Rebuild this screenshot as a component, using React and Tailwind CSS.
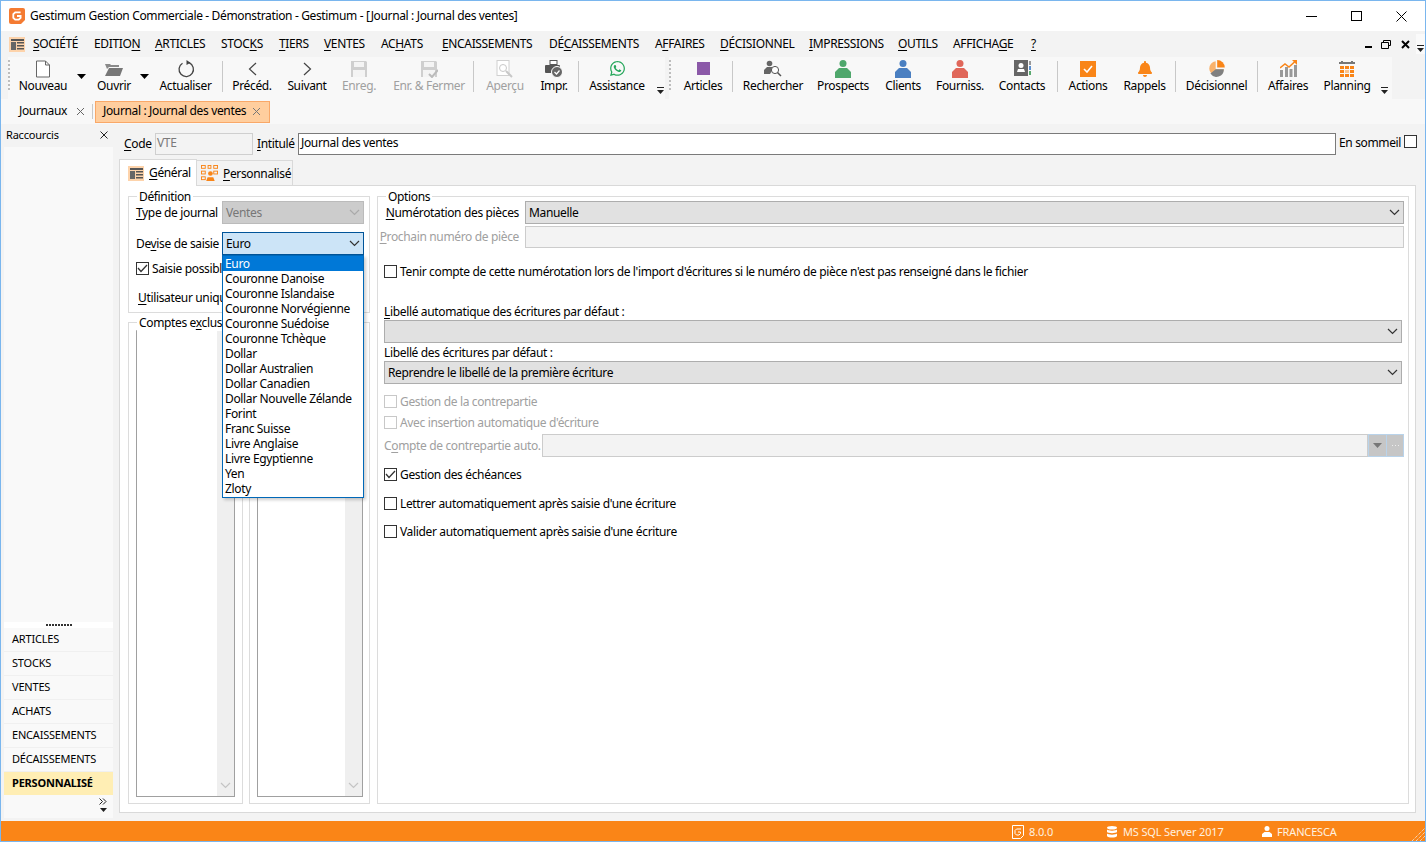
import { FaWhatsapp, FaBell } from 'react-icons/fa';

const Chevron = ({ color = '#333', className = '' }) => (
  <svg width="11" height="7" viewBox="0 0 11 7" className={className}>
    <polyline points="1,1 5.5,5.5 10,1" fill="none" stroke={color} strokeWidth="1.2" />
  </svg>
);

const Caret = ({ color = '#000' }) => (
  <svg width="9" height="5" viewBox="0 0 9 5"><polygon points="0,0 9,0 4.5,5" fill={color} /></svg>
);

const Overflow = () => (
  <svg width="7" height="7" viewBox="0 0 7 7">
    <rect x="0" y="0" width="7" height="1" fill="#222" />
    <polygon points="0,3 7,3 3.5,7" fill="#222" />
  </svg>
);

const GLogo = () => (
  <svg width="16" height="16" viewBox="0 0 16 16">
    <path d="M2 0h12a2 2 0 0 1 2 2v10l-4 4H2a2 2 0 0 1-2-2V2a2 2 0 0 1 2-2z" fill="#f47b32" />
    <path d="M11.6 4.3H6.2L4.3 6.2v3.6l1.9 1.9h3.6l1.8-1.8V8H8" fill="none" stroke="#fff" strokeWidth="1.8" />
  </svg>
);

const FormIcon = () => (
  <svg width="16" height="15" viewBox="0 0 16 15">
    <rect width="16" height="15" fill="#fdd3ab" />
    <rect x="2" y="2" width="13" height="2" fill="#555" />
    <rect x="2" y="5" width="5" height="8" fill="#666" />
    <rect x="8" y="5" width="7" height="1.5" fill="#555" />
    <rect x="8" y="8" width="7" height="1.5" fill="#555" />
    <rect x="8" y="11" width="7" height="1.5" fill="#555" />
  </svg>
);

const Person = ({ color }) => (
  <svg width="16" height="18" viewBox="0 0 16 18">
    <circle cx="8" cy="3.5" r="3.5" fill={color} />
    <path d="M4 8h8l4 4v6H0v-6z" fill={color} />
  </svg>
);

const Floppy = ({ check }) => (
  <svg width="18" height="18" viewBox="0 0 18 18">
    <path d="M1 1h15l1 1v15H1z" fill="#cfcfcf" />
    <rect x="4" y="2" width="10" height="5" fill="#f4f4f4" />
    <rect x="3" y="10" width="12" height="7" fill="#f4f4f4" />
    {check && <polyline points="9,14 12,17 18,10" fill="none" stroke="#bbb" strokeWidth="2" />}
  </svg>
);

const icons = {
  nouveau: (
    <svg width="16" height="18" viewBox="0 0 16 18">
      <path d="M1.5 1h9l4 4v12h-13z M10.5 1v4h4" fill="#fff" stroke="#666" />
    </svg>
  ),
  ouvrir: (
    <svg width="18" height="14" viewBox="0 0 18 14">
      <path d="M0 2h5l1 1h8v2H4L2 7z" fill="#8a8a8a" />
      <path d="M4 6h14l-3 8H0z" fill="#777" />
    </svg>
  ),
  refresh: (
    <svg width="18" height="18" viewBox="0 0 18 18">
      <path d="M5.5 3.2A7.2 7.2 0 1 0 12 2.7" fill="none" stroke="#444" strokeWidth="1.3" />
      <polygon points="9.5,0 13.5,2.8 9.5,5" fill="#444" />
    </svg>
  ),
  prev: (
    <svg width="9" height="14" viewBox="0 0 9 14"><polyline points="8,1 1.5,7 8,13" fill="none" stroke="#444" strokeWidth="1.2" /></svg>
  ),
  next: (
    <svg width="9" height="14" viewBox="0 0 9 14"><polyline points="1,1 7.5,7 1,13" fill="none" stroke="#444" strokeWidth="1.2" /></svg>
  ),
  save: <Floppy />,
  saveClose: <Floppy check />,
  apercu: (
    <svg width="18" height="18" viewBox="0 0 18 18">
      <rect x="1" y="0.5" width="12" height="15" fill="#fff" stroke="#d0d0d0" />
      <circle cx="7" cy="8" r="3.5" fill="none" stroke="#c8c8c8" />
      <line x1="10" y1="11" x2="16" y2="17" stroke="#c8c8c8" strokeWidth="2" />
    </svg>
  ),
  impr: (
    <svg width="18" height="18" viewBox="0 0 18 18">
      <rect x="5" y="0.5" width="7" height="4" fill="#fff" stroke="#555" />
      <rect x="0" y="5" width="15" height="8" rx="1" fill="#555" />
      <circle cx="12" cy="12" r="5.5" fill="#666" stroke="#fff" />
      <polyline points="9.5,12 11.5,14 14.5,10.5" fill="none" stroke="#fff" strokeWidth="1.2" />
    </svg>
  ),
  whatsapp: <FaWhatsapp size={17} color="#27a75c" />,
  articles: <div className="w-[13px] h-[13px] bg-[#8b59a8]" />,
  search: (
    <svg width="18" height="18" viewBox="0 0 18 18">
      <circle cx="5.5" cy="3.5" r="2.8" fill="#666" />
      <path d="M3 7h5l1 2-3 5H0v-4z" fill="#666" />
      <circle cx="11" cy="10" r="3.6" fill="#fff" stroke="#555" />
      <line x1="13.5" y1="12.5" x2="17" y2="16" stroke="#555" strokeWidth="1.5" />
    </svg>
  ),
  prospects: <Person color="#4fa76c" />,
  clients: <Person color="#4a7fc1" />,
  fourniss: <Person color="#e0675a" />,
  contacts: (
    <svg width="17" height="17" viewBox="0 0 17 17">
      <rect width="14" height="16" fill="#666" />
      <circle cx="7" cy="5.5" r="2.5" fill="#fff" />
      <path d="M3 12l1-3h6l1 3z" fill="#fff" />
      <rect x="15" y="1" width="2" height="4" fill="#999" />
      <rect x="15" y="6" width="2" height="4" fill="#5b8fd0" />
      <rect x="15" y="11" width="2" height="4" fill="#5aa96f" />
    </svg>
  ),
  actions: (
    <div className="w-[16px] h-[16px] bg-[#f98518] flex items-center justify-center">
      <svg width="10" height="8" viewBox="0 0 10 8"><polyline points="1,4 4,7 9,1" fill="none" stroke="#fff" strokeWidth="1.6" /></svg>
    </div>
  ),
  rappels: <FaBell size={16} color="#f98518" />,
  pie: (
    <svg width="17" height="17" viewBox="0 0 17 17">
      <path d="M7.7 1.2A7.3 7.3 0 1 0 15.8 9.3H7.7z" fill="#f9b26b" />
      <path d="M9.2 0A7.6 7.6 0 0 1 16.8 7.6H9.2z" fill="#f98518" />
      <path d="M2.4 13.6L7.7 9.3h8.1A7.3 7.3 0 0 1 2.4 13.6z" fill="#808080" />
    </svg>
  ),
  affaires: (
    <svg width="17" height="17" viewBox="0 0 17 17">
      <rect x="0" y="10" width="3" height="7" fill="#999" />
      <rect x="5" y="7" width="3" height="10" fill="#999" />
      <rect x="9.5" y="9" width="3" height="8" fill="#999" />
      <rect x="14" y="5" width="3" height="12" fill="#999" />
      <polyline points="0,8 5,4 9,7 15,1.5" fill="none" stroke="#f98518" strokeWidth="1.5" />
      <polygon points="12,0 17,0 17,5" fill="#f98518" />
    </svg>
  ),
  planning: (
    <svg width="16" height="16" viewBox="0 0 16 16">
      <rect x="0" y="1" width="16" height="2" fill="#777" />
      <rect x="2" y="0" width="2" height="2" fill="#777" />
      <rect x="12" y="0" width="2" height="2" fill="#777" />
      {[5, 9, 13].map((y) =>
        [1, 6, 11].map((x) => (
          <rect key={`${x}-${y}`} x={x} y={y} width="4" height="3" fill={y === 9 && x === 6 ? '#fbc48e' : '#f98518'} />
        ))
      )}
    </svg>
  ),
};

const Tool = ({ w, icon, label, disabled }) => (
  <div className={`${w} h-full flex flex-col items-center`}>
    <div className="h-[19px] mt-[2px] flex items-center justify-center">{icons[icon]}</div>
    <span className={`leading-[16px] ${disabled ? 'text-[#a0a0a0]' : 'text-black'}`}>{label}</span>
  </div>
);

const Sep = () => <div className="w-px h-[31px] mt-[4px] bg-[#c8c8c8]" />;
const Grip = () => (
  <div className="w-[5px] h-[30px] mt-[3px] border-l-2 border-dotted border-[#bdbdbd]" />
);
const Drop = ({ w }) => (
  <div className={`${w} h-[38px] flex items-center justify-center`}><Caret /></div>
);

const Checkbox = ({ checked, disabled }) => (
  <div className={`w-[13px] h-[13px] border bg-white flex items-center justify-center shrink-0 ${disabled ? 'border-[#c8c8c8]' : 'border-[#333]'}`}>
    {checked && (
      <svg width="11" height="9" viewBox="0 0 11 9"><polyline points="1,4 4,7.5 10,1" fill="none" stroke="#333" strokeWidth="1.3" /></svg>
    )}
  </div>
);

const CheckRow = ({ checked, disabled, mt, children }) => (
  <div className={`flex items-center gap-[3px] ml-[6px] h-[13px] ${mt}`}>
    <Checkbox checked={checked} disabled={disabled} />
    <span className={`leading-[16px] ${disabled ? 'text-[#a0a0a0]' : ''}`}>{children}</span>
  </div>
);

const Combo = ({ className, value, disabled }) => (
  <div className={`h-[23px] border flex items-center justify-between pl-[3px] pr-[3px] ${disabled ? 'bg-[#cccccc] border-[#bbbbbb] text-[#777]' : 'bg-[#e1e1e1] border-[#adadad]'} ${className}`}>
    <span>{value}</span>
    <Chevron color={disabled ? '#aaa' : '#333'} />
  </div>
);

const Group = ({ title, className = '', children }) => (
  <div className={`relative border border-[#dcdcdc] ${className}`}>
    {title && <span className="absolute -top-[8px] left-[8px] bg-white px-[2px] leading-[16px] max-w-[85px] overflow-hidden whitespace-nowrap">{title}</span>}
    {children}
  </div>
);

const ListBox = ({ w }) => (
  <div className={`${w} h-full border border-[#a0a0a0] border-t-[#d0d0d0] bg-white flex justify-end`}>
    <div className="w-[17px] h-full bg-[#efefef] flex flex-col justify-end items-center pb-[7px]">
      <Chevron color="#c4c4c4" />
    </div>
  </div>
);

const menus = [
  ['w-[61px]', <><u>S</u>OCIÉTÉ</>],
  ['w-[61px]', <>EDITIO<u>N</u></>],
  ['w-[66px]', <><u>A</u>RTICLES</>],
  ['w-[58px]', <>STOC<u>K</u>S</>],
  ['w-[45px]', <><u>T</u>IERS</>],
  ['w-[57px]', <><u>V</u>ENTES</>],
  ['w-[61px]', <>AC<u>H</u>ATS</>],
  ['w-[107px]', <><u>E</u>NCAISSEMENTS</>],
  ['w-[106px]', <>DÉ<u>C</u>AISSEMENTS</>],
  ['w-[65px]', <>A<u>F</u>FAIRES</>],
  ['w-[89px]', <><u>D</u>ÉCISIONNEL</>],
  ['w-[89px]', <><u>I</u>MPRESSIONS</>],
  ['w-[55px]', <><u>O</u>UTILS</>],
  ['w-[78px]', <>AFFICHA<u>G</u>E</>],
  ['w-[12px]', <u>?</u>],
];

const sideItems = ['ARTICLES', 'STOCKS', 'VENTES', 'ACHATS', 'ENCAISSEMENTS', 'DÉCAISSEMENTS'];

const currencies = [
  'Couronne Danoise', 'Couronne Islandaise', 'Couronne Norvégienne', 'Couronne Suédoise',
  'Couronne Tchèque', 'Dollar', 'Dollar Australien', 'Dollar Canadien', 'Dollar Nouvelle Zélande',
  'Forint', 'Franc Suisse', 'Livre Anglaise', 'Livre Egyptienne', 'Yen', 'Zloty',
];

export default function App() {
  return (
    <div className="w-[1426px] h-[842px] overflow-hidden border border-[#7ab6ee] bg-[#f3f3f3] flex flex-col font-['Noto_Sans',sans-serif] text-[12px] leading-[16px] text-black underline-offset-2 tracking-[-0.35px]">
      {/* title bar */}
      <div className="h-[30px] bg-white flex items-center shrink-0">
        <div className="ml-[8px] w-[21px]"><GLogo /></div>
        <span>Gestimum Gestion Commerciale - Démonstration - Gestimum - [Journal : Journal des ventes]</span>
        <div className="ml-auto flex items-center">
          <div className="w-[11px] h-px bg-black mr-[34px]" />
          <div className="w-[11px] h-[10px] border border-black mr-[34px]" />
          <svg width="11" height="11" viewBox="0 0 11 11" className="mr-[18px]">
            <path d="M0.5 0.5l10 10M10.5 0.5l-10 10" stroke="#000" />
          </svg>
        </div>
      </div>

      {/* menu bar */}
      <div className="h-[26px] flex items-center shrink-0 relative">
        <div className="w-[32px] pl-[8px]"><FormIcon /></div>
        {menus.map(([w, label], i) => (
          <span key={i} className={`${w} whitespace-nowrap`}>{label}</span>
        ))}
        <div className="ml-auto flex items-center">
          <div className="w-[7px] h-[2px] bg-black mt-[6px] mr-[9px]" />
          <svg width="10" height="9" viewBox="0 0 10 9" className="mr-[10px]">
            <path d="M2.5 2V.5h7v5H8M.5 2.500h7v6h-7z" fill="none" stroke="#000" />
          </svg>
          <svg width="9" height="9" viewBox="0 0 9 9" className="mr-[6px]">
            <path d="M1 1l7 7M8 1l-7 7" stroke="#000" strokeWidth="2" />
          </svg>
          <div className="w-[9px] h-[20px] bg-[#fafafa] flex items-end justify-center pb-[2px] mr-0"><Overflow /></div>
        </div>
      </div>

      {/* toolbars */}
      <div className="h-[42px] flex shrink-0">
        <div className="w-[7px]" />
        <div className="h-full flex bg-[#f8f8f8]">
          <Grip />
          <Tool w="w-[60px]" icon="nouveau" label="Nouveau" />
          <Drop w="w-[16px]" />
          <Tool w="w-[50px]" icon="ouvrir" label="Ouvrir" />
          <Drop w="w-[10px]" />
          <Tool w="w-[73px]" icon="refresh" label="Actualiser" />
          <Sep />
          <Tool w="w-[58px]" icon="prev" label="Précéd." />
          <Tool w="w-[52px]" icon="next" label="Suivant" />
          <Tool w="w-[52px]" icon="save" label="Enreg." disabled />
          <Tool w="w-[88px]" icon="saveClose" label="Enr. & Fermer" disabled />
          <Sep />
          <Tool w="w-[62px]" icon="apercu" label="Aperçu" disabled />
          <Tool w="w-[36px]" icon="impr" label="Impr." />
          <div className="w-[6px]" />
          <Sep />
          <Tool w="w-[76px]" icon="whatsapp" label="Assistance" />
          <div className="w-[10px] flex items-end justify-center pb-[5px]"><Overflow /></div>
        </div>
        <div className="w-[4px]" />
        <div className="h-full flex bg-[#f8f8f8]">
          <Grip />
          <Tool w="w-[58px]" icon="articles" label="Articles" />
          <Sep />
          <Tool w="w-[80px]" icon="search" label="Rechercher" />
          <Tool w="w-[60px]" icon="prospects" label="Prospects" />
          <Tool w="w-[60px]" icon="clients" label="Clients" />
          <Tool w="w-[54px]" icon="fourniss" label="Fourniss." />
          <Tool w="w-[70px]" icon="contacts" label="Contacts" />
          <Sep />
          <Tool w="w-[60px]" icon="actions" label="Actions" />
          <Tool w="w-[53px]" icon="rappels" label="Rappels" />
          <div className="w-[4px]" />
          <Sep />
          <Tool w="w-[81px]" icon="pie" label="Décisionnel" />
          <Sep />
          <Tool w="w-[60px]" icon="affaires" label="Affaires" />
          <Tool w="w-[58px]" icon="planning" label="Planning" />
          <div className="w-[16px] flex items-end justify-center pb-[5px]"><Overflow /></div>
        </div>
      </div>

      {/* document tabs */}
      <div className="h-[25px] bg-[#f8f8f8] flex items-center shrink-0">
        <span className="ml-[18px] w-[57px] pb-[2px]">Journaux</span>
        <svg width="9" height="9" viewBox="0 0 9 9"><path d="M1 1l7 7M8 1l-7 7" stroke="#666" /></svg>
        <div className="w-px h-[15px] bg-[#c8c8c8] ml-[7px] mr-[2px]" />
        <div className="w-[175px] h-[22px] bg-[#ffce9e] border border-[#f9a868] flex items-center pl-[7px]">
          <span className="w-[149px] whitespace-nowrap pb-[2px]">Journal : Journal des ventes</span>
          <svg width="9" height="9" viewBox="0 0 9 9"><path d="M1 1l7 7M8 1l-7 7" stroke="#777" /></svg>
        </div>
      </div>

      {/* body */}
      <div className="h-[697px] flex shrink-0">
        {/* shortcuts sidebar */}
        <div className="ml-[3px] w-[109px] flex flex-col pb-[3px]">
          <div className="h-[23px] flex items-center justify-between pl-[2px] pr-[5px] pb-[2px] text-[11px] tracking-[-0.2px]">
            <span>Raccourcis</span>
            <svg width="8" height="8" viewBox="0 0 8 8"><path d="M0.500 0.500l7 7M7.500 0.500l-7 7" stroke="#222" /></svg>
          </div>
          <div className="flex-1 bg-[#f9f9f9]" />
          <div className="h-[6px] bg-white flex items-center justify-center gap-[1px]">
            {[0, 1, 2, 3, 4, 5, 6, 7, 8].map((d) => <div key={d} className="w-[2px] h-[2px] bg-[#333]" />)}
          </div>
          {sideItems.map((item) => (
            <div key={item} className="h-[24px] bg-[#f9f9f9] border-b border-[#f0f0f0] flex items-center pl-[8px] pb-[1px] text-[11px] tracking-[-0.2px]">{item}</div>
          ))}
          <div className="h-[23px] bg-[#ffeeb4] flex items-center pl-[8px] pb-[2px] text-[11px] font-bold tracking-[-0.2px]">PERSONNALISÉ</div>
          <div className="h-[23px] bg-[#f9f9f9] flex flex-col items-end pr-[6px] pt-[3px]">
            <svg width="8" height="7" viewBox="0 0 8 7"><path d="M0.500 0.500l3 3-3 3M4 0.500l3 3-3 3" fill="none" stroke="#222" /></svg>
            <div className="mt-[3px] w-[7px] flex"><svg width="7" height="4" viewBox="0 0 7 4"><polygon points="0,0 7,0 3.5,4" fill="#222" /></svg></div>
          </div>
        </div>

        {/* main area */}
        <div className="ml-[6px] w-[1297px] flex flex-col">
          <div className="mt-[9px] h-[22px] flex items-center relative shrink-0">
            <span className="ml-[5px] w-[31px]"><u>C</u>ode</span>
            <div className="w-[98px] h-[22px] bg-[#f3f3f3] border border-[#cfcfcf] pl-[1px] pb-[2px] text-[#7a7a7a] flex items-center">VTE</div>
            <span className="ml-[4px] w-[41px]"><u>I</u>ntitulé</span>
            <div className="w-[1038px] h-[22px] bg-white border border-[#7a7a7a] pl-[2px] pb-[2px] flex items-center">Journal des ventes</div>
            <span className="ml-[3px] whitespace-nowrap pb-[2px]">En sommeil</span>
            <div className="absolute left-[1285px] top-[2px]"><Checkbox /></div>
          </div>

          <div className="mt-[3px] h-[27px] flex items-end shrink-0">
            <div className="w-[78px] h-[27px] bg-white border border-b-0 border-[#d9d9d9] flex items-center pl-[8px] gap-[5px] -mb-px z-10">
              <FormIcon />
              <span className="pb-[1px]"><u>G</u>énéral</span>
            </div>
            <div className="w-[96px] h-[25px] bg-[#f3f3f3] border border-b-0 border-l-0 border-[#d9d9d9] flex items-center pl-[4px] gap-[5px]">
              <svg width="17" height="17" viewBox="0 0 18 18">
                <g fill="none" stroke="#f98518">
                  <rect x="0.500" y="0.500" width="4" height="3" /><rect x="0.500" y="6.500" width="4" height="3" /><rect x="0.500" y="12.500" width="4" height="3" />
                  <rect x="7.500" y="0.500" width="3" height="3" /><rect x="13.500" y="0.500" width="4" height="3" /><rect x="13.500" y="6.500" width="4" height="3" />
                </g>
                <circle cx="10" cy="9" r="2.500" fill="#f98518" />
                <path d="M5.500 17l1.500-4h6l1.500 4z" fill="#f98518" />
              </svg>
              <span className="pt-[1px]"><u>P</u>ersonnalisé</span>
            </div>
          </div>

          {/* tab panel */}
          <div className="h-[628px] bg-white border border-[#d9d9d9] flex pl-[8px] pr-[6px] pt-[10px] pb-[8px] gap-[7px] shrink-0">
            <div className="w-[242px] flex flex-col">
              <Group title="Définition" className="h-[117px] pl-[7px] pt-[4px] z-20">
                <div className="flex items-center h-[23px]">
                  <span className="w-[86px] whitespace-nowrap"><u>T</u>ype de journal</span>
                  <Combo className="w-[142px]" value="Ventes" disabled />
                </div>
                <div className="flex items-center h-[23px] mt-[8px]">
                  <span className="w-[86px] whitespace-nowrap">De<u>v</u>ise de saisie</span>
                  <div className="relative w-[142px]">
                    <div className="h-[23px] bg-[#cce4f7] border border-[#005499] flex items-center justify-between px-[3px]">
                      <span>Euro</span>
                      <Chevron />
                    </div>
                    <div className="absolute top-full left-0 w-[142px] bg-white border border-[#0068b8] shadow-[2px_2px_3px_rgba(0,0,0,0.2)] pb-[1px]">
                      <div className="h-[15px] leading-[15px] bg-[#0078d7] text-white pl-[2px]">Euro</div>
                      {currencies.map((c) => (
                        <div key={c} className="h-[15px] leading-[15px] pl-[2px] whitespace-nowrap">{c}</div>
                      ))}
                    </div>
                  </div>
                </div>
                <div className="flex items-center gap-[3px] h-[13px] mt-[7px]">
                  <Checkbox checked />
                  <span className="w-[70px] overflow-hidden whitespace-nowrap">Saisie possible</span>
                </div>
                <div className="mt-[15px] ml-[2px] w-[84px] overflow-hidden whitespace-nowrap"><u>U</u>tilisateur unique</div>
              </Group>
              <div className="mt-[9px] flex-1 min-h-0 flex gap-[6px]">
                <Group title={<>Comptes e<u>x</u>clus</>} className="w-[115px] pl-[7px] pt-[7px] pb-[6px]">
                  <ListBox w="w-[99px]" />
                </Group>
                <Group className="w-[121px] pl-[7px] pt-[7px] pb-[6px]">
                  <ListBox w="w-[106px]" />
                </Group>
              </div>
            </div>

            <Group title="Options" className="w-[1033px] pt-[4px]">
              <div className="flex items-center h-[23px]">
                <span className="w-[141px] text-right whitespace-nowrap"><u>N</u>umérotation des pièces</span>
                <Combo className="w-[879px] ml-[6px]" value="Manuelle" />
              </div>
              <div className="flex items-center h-[22px] mt-[2px]">
                <span className="w-[141px] text-right whitespace-nowrap text-[#a0a0a0]"><u>P</u>rochain numéro de pièce</span>
                <div className="w-[879px] h-[22px] ml-[6px] bg-[#f3f3f3] border border-[#cccccc]" />
              </div>
              <CheckRow mt="mt-[17px]">Tenir compte de cette numérotation lors de l'import d'écritures si le numéro de pièce n'est pas renseigné dans le fichier</CheckRow>
              <div className="mt-[26px] ml-[6px]"><u>L</u>ibellé automatique des écritures par défaut :</div>
              <Combo className="w-[1018px] ml-[6px]" value="" />
              <div className="mt-[2px] ml-[6px]">Libellé des écritures par défaut :</div>
              <Combo className="w-[1018px] ml-[6px]" value="Reprendre le libellé de la première écriture" />
              <CheckRow mt="mt-[11px]" disabled>Gestion de la contrepartie</CheckRow>
              <CheckRow mt="mt-[8px]" disabled>Avec insertion automatique d'écriture</CheckRow>
              <div className="mt-[5px] ml-[6px] flex items-center h-[23px]">
                <span className="w-[158px] whitespace-nowrap text-[#a0a0a0]">C<u>o</u>mpte de contrepartie auto.</span>
                <div className="w-[826px] h-[23px] bg-[#f3f3f3] border border-[#cccccc]" />
                <div className="h-[23px] w-[36px] bg-[#b9d3ea] flex items-center pl-px gap-px">
                  <div className="w-[17px] h-[21px] bg-[#c6c6c6] flex items-center justify-center"><Caret color="#777" /></div>
                  <div className="w-[16px] h-[21px] bg-[#c6c6c6] flex items-center justify-center gap-[2px]">
                    {[0, 1, 2].map((d) => <div key={d} className="w-px h-px bg-[#eeeeee]" />)}
                  </div>
                </div>
              </div>
              <CheckRow mt="mt-[11px]" checked>Gestion des échéances</CheckRow>
              <CheckRow mt="mt-[16px]">Lettrer automatiquement après saisie d'une écriture</CheckRow>
              <CheckRow mt="mt-[15px]">Valider automatiquement après saisie d'une écriture</CheckRow>
            </Group>
          </div>
        </div>
      </div>

      {/* status bar */}
      <div className="flex-1 bg-[#fa8517] flex items-center text-[#fff1e0] text-[11px] tracking-[-0.15px] pt-[1px] relative">
        <svg width="14" height="14" viewBox="0 0 14 14" className="ml-[1010px]">
          <path d="M1.500 0.500h11v10l-3 3h-8z" fill="none" stroke="#fff" />
          <path d="M10 4H5.500L4 5.500v3L5.500 10h2.500l1.500-1.500V7H7" fill="none" stroke="#fff" />
        </svg>
        <span className="ml-[4px] w-[78px]">8.0.0</span>
        <svg width="10" height="12" viewBox="0 0 10 12">
          <ellipse cx="5" cy="1.800" rx="5" ry="1.800" fill="#fff" />
          <path d="M0 3.500c1 1.500 9 1.500 10 0v2.500c-1 1.500-9 1.500-10 0zM0 7.500c1 1.500 9 1.500 10 0v2.500c-1 2-9 2-10 0z" fill="#fff" />
        </svg>
        <span className="ml-[6px] w-[139px]">MS SQL Server 2017</span>
        <svg width="10" height="11" viewBox="0 0 10 11">
          <circle cx="5" cy="2.500" r="2.500" fill="#fff" />
          <path d="M2.500 6h5l2.500 2v3H0V8z" fill="#fff" />
        </svg>
        <span className="ml-[5px]">FRANCESCA</span>
        <svg width="13" height="13" viewBox="0 0 13 13" className="absolute right-0 bottom-0">
          <path d="M0 13L13 0M4 13l9-9M8 13l5-5" stroke="#f3f3f3" strokeDasharray="1 1" fill="none" />
        </svg>
      </div>
    </div>
  );
}
